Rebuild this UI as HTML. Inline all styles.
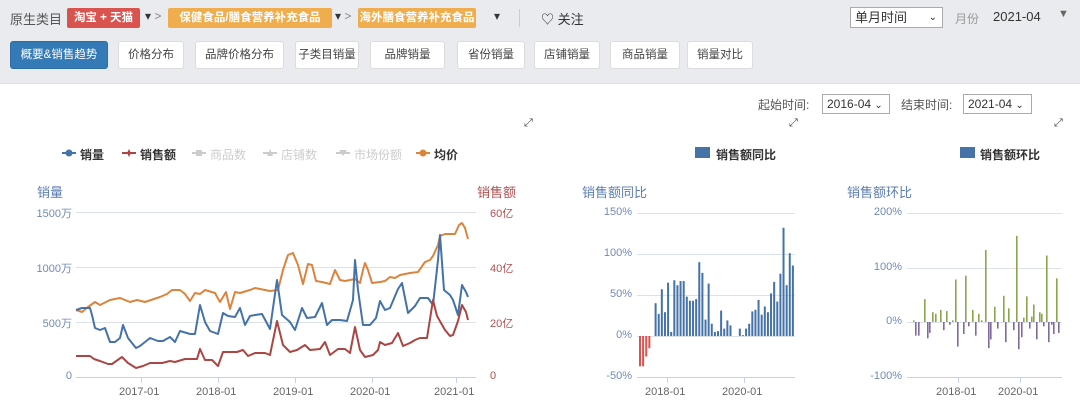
<!DOCTYPE html>
<html><head><meta charset="utf-8"><style>
*{margin:0;padding:0;box-sizing:border-box}
body{width:1080px;height:411px;overflow:hidden;background:#fff;font-family:"Liberation Sans","Noto Sans CJK SC",sans-serif;position:relative;color:#333}
.top{position:absolute;left:0;top:0;width:1080px;height:84px;background:#e9ebee;border-bottom:1px solid #dde0e4}
.a{position:absolute;white-space:nowrap}
.tag{position:absolute;top:8px;height:20px;color:#fff;font-weight:bold;font-size:11.5px;line-height:20px;text-align:center;border-radius:2px;white-space:nowrap;overflow:hidden}
.btn{position:absolute;top:41px;height:28px;background:#fff;border:1px solid #dcdcdc;border-radius:3px;font-size:11.5px;line-height:26px;text-align:center;color:#444;white-space:nowrap}
.sel{position:absolute;background:#fff;border:1px solid #aaa;font-size:13px;color:#333;padding-left:4px;line-height:19px}
.lg{position:absolute;top:146px;font-size:12px;font-weight:bold;color:#333}
.tk{position:absolute;font-size:11px;color:#7289b4}
</style></head><body>
<div class="top"></div>
<div class="a" style="left:10px;top:9px;font-size:13px;color:#555">原生类目</div>
<div class="tag" style="left:67px;width:73px;background:#d9534f">淘宝 + 天猫</div>
<div class="a" style="left:145px;top:9px;font-size:12px;color:#333">▾ <span style="color:#888">&gt;</span></div>
<div class="tag" style="left:168px;width:164px;background:#f0ad4e">保健食品/膳食营养补充食品</div>
<div class="a" style="left:335px;top:9px;font-size:12px;color:#333">▾ <span style="color:#888">&gt;</span></div>
<div class="tag" style="left:358px;width:118px;background:#f0ad4e">海外膳食营养补充食品</div>
<div class="a" style="left:494px;top:9px;font-size:12px;color:#333">▾</div>
<div class="a" style="left:519px;top:9px;width:1px;height:18px;background:#ccc"></div>
<div class="a" style="left:541px;top:9px;font-size:13px;color:#333">♡ 关注</div>
<div class="sel" style="left:850px;top:7px;width:93px;height:21px">单月时间<span style="position:absolute;right:5px;font-size:10px">⌄</span></div>
<div class="a" style="left:955px;top:10px;font-size:12px;color:#999">月份</div>
<div class="a" style="left:993px;top:9px;font-size:13px;color:#333">2021-04</div>
<div class="a" style="left:1058px;top:8px;font-size:11px;color:#666">▼</div>
<div class="btn" style="left:10px;width:98px;background:#337ab7;border-color:#2e6da4;color:#fff">概要&amp;销售趋势</div>
<div class="btn" style="left:118px;width:66px">价格分布</div>
<div class="btn" style="left:195px;width:89px">品牌价格分布</div>
<div class="btn" style="left:295px;width:64px">子类目销量</div>
<div class="btn" style="left:370px;width:75px">品牌销量</div>
<div class="btn" style="left:457px;width:68px">省份销量</div>
<div class="btn" style="left:534px;width:66px">店铺销量</div>
<div class="btn" style="left:610px;width:70px">商品销量</div>
<div class="btn" style="left:687px;width:66px">销量对比</div>

<div class="a" style="left:758px;top:96px;font-size:12px;color:#555">起始时间:</div>
<div class="sel" style="left:822px;top:94px;width:68px;height:20px;font-size:12px">2016-04 <span style="font-size:10px">⌄</span></div>
<div class="a" style="left:901px;top:96px;font-size:12px;color:#555">结束时间:</div>
<div class="sel" style="left:963px;top:94px;width:69px;height:20px;font-size:12px">2021-04 <span style="font-size:10px">⌄</span></div>
<div class="a" style="left:524px;top:117px;font-size:11px;color:#444">⤢</div>
<div class="a" style="left:789px;top:117px;font-size:11px;color:#444">⤢</div>
<div class="a" style="left:1054px;top:117px;font-size:11px;color:#444">⤢</div>

<svg class="a" style="left:0;top:0" width="1080" height="411">
<g stroke-width="2">
<line x1="62" y1="153" x2="76" y2="153" stroke="#4572a7"/><circle cx="69" cy="153" r="3.5" fill="#4572a7"/>
<line x1="122" y1="153" x2="136" y2="153" stroke="#aa4643"/><path d="M129 149l2 4-2 4-2-4z" fill="#aa4643"/>
<line x1="192" y1="153" x2="206" y2="153" stroke="#ccc"/><rect x="196" y="150" width="6" height="6" fill="#ccc"/>
<line x1="263" y1="153" x2="277" y2="153" stroke="#ccc"/><path d="M270 149l3 7h-6z" fill="#ccc"/>
<line x1="336" y1="153" x2="350" y2="153" stroke="#ccc"/><path d="M339 150h8l-4 6z" fill="#ccc"/>
<line x1="416" y1="153" x2="430" y2="153" stroke="#db843d"/><circle cx="423" cy="153" r="3.5" fill="#db843d"/>
</g>
<rect x="695" y="147" width="15" height="11" fill="#4572a7"/>
<rect x="960" y="147" width="15" height="11" fill="#4572a7"/>
<g stroke="#dde2ea" stroke-width="1">
<line x1="76" y1="212.5" x2="476" y2="212.5"/><line x1="76" y1="267.5" x2="476" y2="267.5"/><line x1="76" y1="322.5" x2="476" y2="322.5"/><line x1="76" y1="377.5" x2="476" y2="377.5" stroke="#c8d2e4"/>
<line x1="637" y1="213.5" x2="795" y2="213.5"/><line x1="637" y1="254.5" x2="795" y2="254.5"/><line x1="637" y1="295.5" x2="795" y2="295.5"/><line x1="637" y1="336.5" x2="795" y2="336.5"/><line x1="637" y1="377.5" x2="795" y2="377.5" stroke="#c8d2e4"/>
<line x1="907" y1="213.5" x2="1062" y2="213.5"/><line x1="907" y1="268.5" x2="1062" y2="268.5"/><line x1="907" y1="322.5" x2="1062" y2="322.5"/><line x1="907" y1="377.5" x2="1062" y2="377.5" stroke="#c8d2e4"/>
</g>
<g stroke="#c8d2e4"><line x1="141.5" y1="378" x2="141.5" y2="383"/><line x1="218.5" y1="378" x2="218.5" y2="383"/><line x1="295.5" y1="378" x2="295.5" y2="383"/><line x1="372.5" y1="378" x2="372.5" y2="383"/><line x1="456.5" y1="378" x2="456.5" y2="383"/><line x1="667.5" y1="378" x2="667.5" y2="383"/><line x1="744.5" y1="378" x2="744.5" y2="383"/><line x1="958.5" y1="378" x2="958.5" y2="383"/><line x1="1020.5" y1="378" x2="1020.5" y2="383"/></g>
<g fill="none" stroke-width="2" stroke-linejoin="round">
<polyline stroke="#db843d" points="76,310 82,312 88,307 95,302 100,305 110,300 120,298 130,302 137,300 145,302 160,297 167,294 172,290 180,290 185,294 190,301 195,293 200,294 205,290 215,293 220,302 226,292 230,309 235,292 240,293 250,290 255,288 265,290 270,291 278,290 283,270 288,255 293,253 298,265 303,284 308,264 312,265 316,281 322,282 330,284 335,270 340,280 345,281 350,280 355,279 360,283 363,270 365,263 368,270 372,283 380,282 385,281 390,277 395,278 400,275 410,273 418,272 425,262 430,260 433,256 438,245 440,236 445,234 455,234 459,225 462,223 465,228 468,239"/>
<polyline stroke="#4572a7" points="76,310 82,308 90,308 92,315 95,328 100,330 105,328 110,342 115,342 120,338 123,325 128,338 136,348 140,346 150,338 158,341 163,341 170,337 175,342 180,331 190,334 195,334 200,305 205,322 210,331 218,334 223,313 228,316 235,317 240,308 245,325 250,316 255,315 262,314 270,329 277,280 282,315 290,322 295,330 302,308 307,318 315,317 322,303 327,325 332,320 340,320 347,321 353,300 355,260 358,290 363,325 370,325 376,318 380,301 385,310 390,308 398,289 402,283 408,313 415,306 420,298 428,298 433,305 438,260 440,235 444,290 450,295 453,300 458,315 462,285 466,292 468,297"/>
<polyline stroke="#aa4643" points="76,356 90,356 94,359 100,361 108,364 112,364 122,357 128,363 136,368 143,366 150,363 162,363 170,361 175,362 185,359 197,359 200,349 205,360 212,360 218,366 223,352 230,352 237,352 243,350 248,356 255,353 265,353 270,355 277,321 283,345 290,352 297,350 305,345 310,350 320,349 325,342 330,355 338,349 345,349 350,353 355,327 360,350 365,357 373,355 378,350 380,342 385,345 392,343 398,333 403,346 410,343 415,340 420,338 427,338 433,300 437,316 445,330 450,336 453,335 458,321 462,305 466,312 468,320"/>
</g>
<g id="b1"></g><g id="b2"></g>
</svg>

<div class="a" style="left:37px;top:182px;font-size:13px;color:#5b7db1">销量</div>
<div class="a" style="left:477px;top:182px;font-size:13px;color:#b05050">销售额</div>
<div class="a" style="left:582px;top:182px;font-size:13px;color:#5b7db1">销售额同比</div>
<div class="a" style="left:847px;top:182px;font-size:13px;color:#5b7db1">销售额环比</div>
<div class="lg" style="left:80px">销量</div>
<div class="lg" style="left:140px">销售额</div>
<div class="lg" style="left:210px;color:#ccc;font-weight:normal">商品数</div>
<div class="lg" style="left:281px;color:#ccc;font-weight:normal">店铺数</div>
<div class="lg" style="left:354px;color:#ccc;font-weight:normal">市场份额</div>
<div class="lg" style="left:434px">均价</div>
<div class="lg" style="left:716px">销售额同比</div>
<div class="lg" style="left:980px">销售额环比</div>

<div class="tk" style="left:30px;top:205px;width:42px;text-align:right">1500万</div>
<div class="tk" style="left:30px;top:260px;width:42px;text-align:right">1000万</div>
<div class="tk" style="left:30px;top:315px;width:42px;text-align:right">500万</div>
<div class="tk" style="left:30px;top:370px;width:42px;text-align:right">0</div>
<div class="tk" style="left:490px;top:205px;color:#b05050">60亿</div>
<div class="tk" style="left:490px;top:260px;color:#b05050">40亿</div>
<div class="tk" style="left:490px;top:315px;color:#b05050">20亿</div>
<div class="tk" style="left:490px;top:370px;color:#b05050">0</div>
<div class="tk" style="left:119px;top:386px;color:#666">2017-01</div>
<div class="tk" style="left:196px;top:386px;color:#666">2018-01</div>
<div class="tk" style="left:273px;top:386px;color:#666">2019-01</div>
<div class="tk" style="left:350px;top:386px;color:#666">2020-01</div>
<div class="tk" style="left:434px;top:386px;color:#666">2021-01</div>
<div class="tk" style="left:590px;top:206px;width:42px;text-align:right">150%</div>
<div class="tk" style="left:590px;top:247px;width:42px;text-align:right">100%</div>
<div class="tk" style="left:590px;top:288px;width:42px;text-align:right">50%</div>
<div class="tk" style="left:590px;top:329px;width:42px;text-align:right">0%</div>
<div class="tk" style="left:590px;top:370px;width:42px;text-align:right">-50%</div>
<div class="tk" style="left:645px;top:386px;color:#666">2018-01</div>
<div class="tk" style="left:722px;top:386px;color:#666">2020-01</div>
<div class="tk" style="left:860px;top:206px;width:42px;text-align:right">200%</div>
<div class="tk" style="left:860px;top:261px;width:42px;text-align:right">100%</div>
<div class="tk" style="left:860px;top:315px;width:42px;text-align:right">0%</div>
<div class="tk" style="left:860px;top:370px;width:42px;text-align:right">-100%</div>
<div class="tk" style="left:936px;top:386px;color:#666">2018-01</div>
<div class="tk" style="left:998px;top:386px;color:#666">2020-01</div>
<script>
var NS="http://www.w3.org/2000/svg";
function r(g,x,y,w,h,c){var e=document.createElementNS(NS,"rect");e.setAttribute("x",x);e.setAttribute("y",y);e.setAttribute("width",w);e.setAttribute("height",h);e.setAttribute("fill",c);g.appendChild(e);}
var v=[-37,-37,-25,-15,0,40,27,57,29,65,5,68,62,67,67,48,43,43,45,90,77,20,64,15,5,6,31,9,19,13,0,0,9,1,9,15,30,32,44,26,36,29,52,66,42,76,132,62,101,86];
var g1=document.getElementById("b1");
v.forEach(function(p,i){var x=639+i*3.12,h=Math.abs(p)*0.82;if(!h)return;r(g1,x,p>0?336-h:336,2,h,p>0?"#4572a7":"#d9534f");});
var w=[[913,3],[915,-25],[918,-25],[924,42],[927,-30],[929,-20],[932,18],[935,15],[940,22],[943,-15],[946,20],[949,-5],[952,3],[955,78],[957,-45],[963,-22],[965,85],[968,-8],[972,22],[975,-25],[978,15],[981,3],[985,132],[988,-48],[990,-32],[994,28],[997,-12],[1003,48],[1005,-37],[1008,25],[1013,-15],[1016,158],[1018,-50],[1021,-28],[1023,8],[1026,47],[1029,-12],[1031,10],[1033,32],[1036,-32],[1039,18],[1041,15],[1043,-8],[1046,122],[1048,-37],[1051,-5],[1053,-22],[1056,80],[1058,-20]];
var g2=document.getElementById("b2");
w.forEach(function(a){var p=a[1],h=Math.abs(p)*0.545;r(g2,a[0],p>0?322-h:322,1.6,h,p>0?"#89a54e":"#80699b");});
</script>
</body></html>
